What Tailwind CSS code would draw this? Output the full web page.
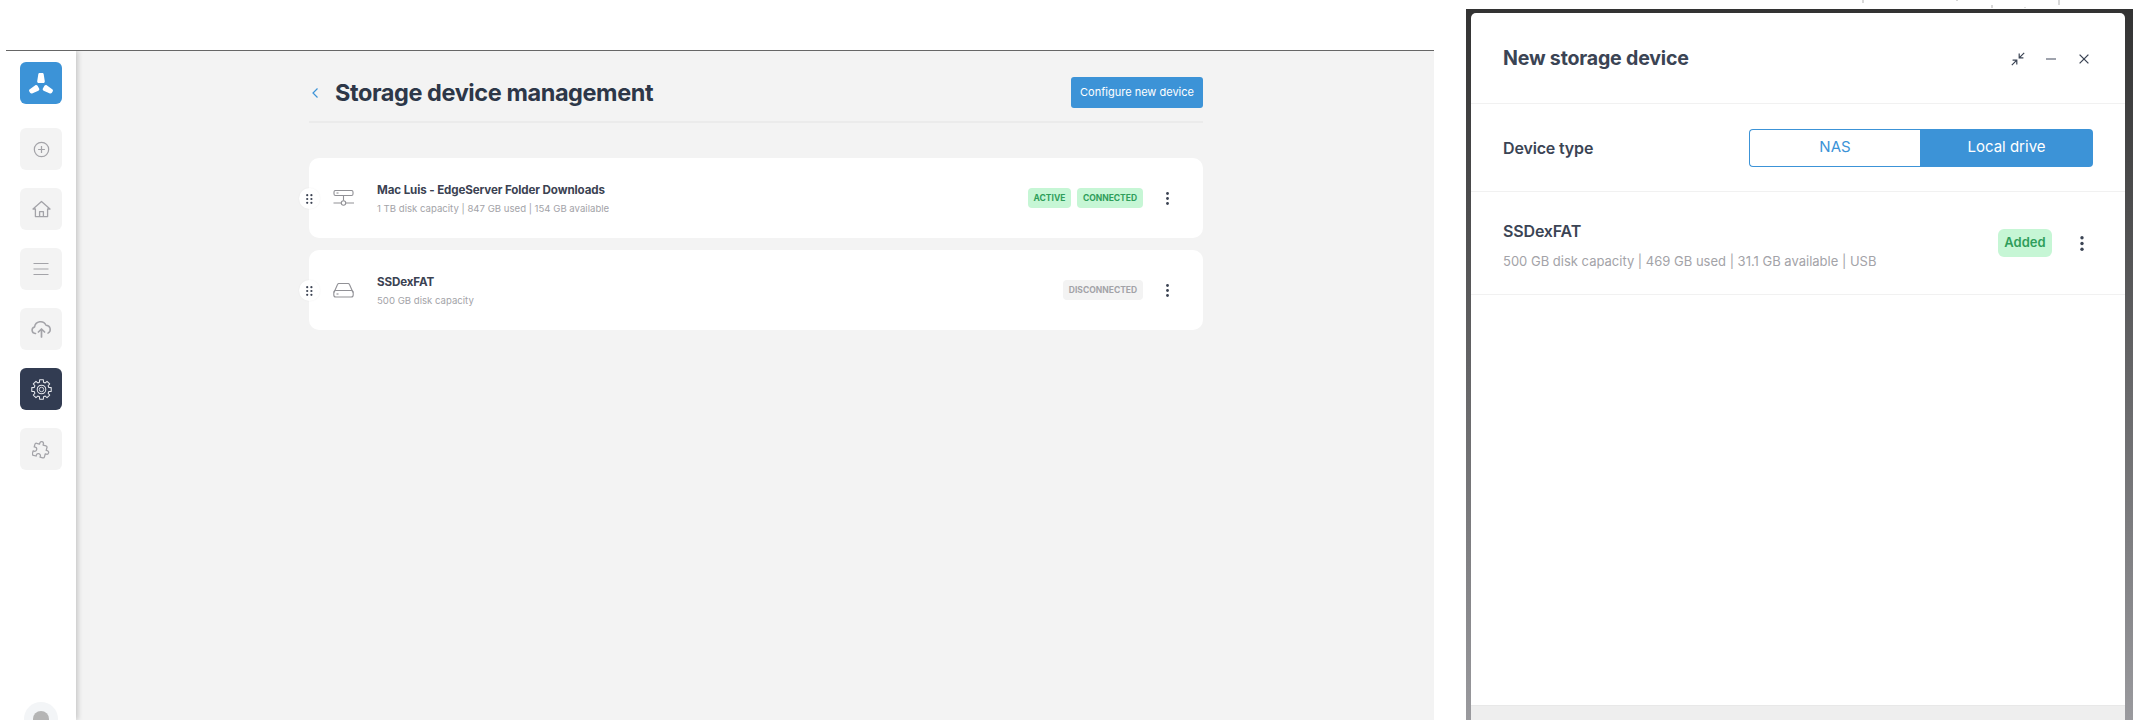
<!DOCTYPE html>
<html lang="en">
<head>
  <meta charset="UTF-8" />
  <title>Storage device management</title>
  <script src="https://cdn.jsdelivr.net/npm/@tailwindcss/browser@4"></script>
</head>
<body class="bg-white h-[720px] w-[2140px] overflow-hidden relative font-['Inter',sans-serif]">

  <!-- specks left over above the window -->
  <div class="absolute left-[1862px] top-0 w-[2px] h-[3px] bg-[#d8d8d8]"></div>
  <div class="absolute left-[1956px] top-0 w-[2px] h-[1px] bg-[#d8d8d8]"></div>
  <div class="absolute left-[1991px] top-[5px] w-[2px] h-[3px] bg-[#d8d8d8]"></div>
  <div class="absolute left-[2024px] top-[7px] w-[2px] h-[1px] bg-[#e0e0e0]"></div>
  <div class="absolute left-[2058px] top-0 w-[2px] h-[5px] bg-[#d8d8d8]"></div>

  <div class="flex h-full">
    <!-- App window -->
    <div class="ml-[6px] mt-[50px] w-[1428px] h-[670px] border-t-[1.5px] border-[#666] flex overflow-hidden">
      <aside class="w-[70px] shrink-0 bg-white flex flex-col items-center pt-[11px] relative z-10 shadow-[2px_0_5px_rgba(0,0,0,0.18)]">
        <div class="w-[42px] h-[42px] rounded-[6px] bg-[#3c93d7] flex items-center justify-center mb-[24px]">
          <svg width="24" height="21" viewBox="0 0 24 21" fill="#fff">
            <path d="M9.3 1.3C9.4.5 10 0 10.8 0h2.4c.8 0 1.4.5 1.5 1.3l1.1 6.9c.1.9-.6 1.8-1.5 1.8H9.7c-.9 0-1.6-.9-1.5-1.8z"/>
            <path d="M.8 16.2c-.7.4-1 1.3-.6 2l.9 1.6c.4.7 1.3 1 2 .7l6.3-2.8c.9-.4 1.2-1.5.7-2.3l-1.5-2.6c-.5-.8-1.6-1-2.3-.5z"/>
            <path d="M23.2 16.2c.7.4 1 1.3.6 2l-.9 1.6c-.4.7-1.3 1-2 .7l-6.3-2.8c-.9-.4-1.2-1.5-.7-2.3l1.5-2.6c.5-.8 1.6-1 2.3-.5z"/>
          </svg>
        </div>
        <div class="flex flex-col gap-[18px]">
          <div class="w-[42px] h-[42px] rounded-[6px] bg-[#f3f3f3] flex items-center justify-center">
            <svg width="17" height="17" viewBox="0 0 18 18" fill="none" stroke="#a3a3a8" stroke-width="1.3"><circle cx="9" cy="9" r="7.6"/><path d="M9 5.4v7.2M5.4 9h7.2"/></svg>
          </div>
          <div class="w-[42px] h-[42px] rounded-[6px] bg-[#f3f3f3] flex items-center justify-center">
            <svg width="19" height="18" viewBox="0 0 19 18" fill="none" stroke="#a3a3a8" stroke-width="1.3" stroke-linejoin="round"><path d="M1 9l8.5-7.5L18 9h-2.4v7.6H3.4V9z"/><path d="M7.6 16.6v-5h3.8v5"/></svg>
          </div>
          <div class="w-[42px] h-[42px] rounded-[6px] bg-[#f3f3f3] flex items-center justify-center">
            <svg width="16" height="14" viewBox="0 0 16 14" fill="none" stroke="#a3a3a8" stroke-width="1.2"><path d="M0.5 1.5h15M0.5 7h15M0.5 12.5h15"/></svg>
          </div>
          <div class="w-[42px] h-[42px] rounded-[6px] bg-[#f3f3f3] flex items-center justify-center">
            <svg width="21" height="18" viewBox="0 0 21 18" fill="none" stroke="#a3a3a8" stroke-width="1.5" stroke-linecap="round" stroke-linejoin="round"><path d="M4.6 13.4H4.2A3.3 3.3 0 0 1 3.6 6.9 6 6 0 0 1 15 5.2a4.2 4.2 0 0 1 2 7.9"/><path d="M10.5 17V9.4M7.4 12l3.1-3 3.1 3" stroke-width="1.7"/></svg>
          </div>
          <div class="w-[42px] h-[42px] rounded-[6px] bg-[#323c52] flex items-center justify-center">
            <svg width="21" height="21" viewBox="-12.2 -12.2 24.4 24.4" fill="none" stroke="#e7e9ee" stroke-width="1.2" stroke-linejoin="round"><path d="M-2.35-8.48L-2.19-11.29 2.19-11.29 2.35-8.48 4.33-7.66 6.43-9.53 9.53-6.43 7.66-4.33 8.48-2.35 11.29-2.19 11.29 2.19 8.48 2.35 7.66 4.33 9.53 6.43 6.43 9.53 4.33 7.66 2.35 8.48 2.19 11.29-2.19 11.29-2.35 8.48-4.33 7.66-6.43 9.53-9.53 6.43-7.66 4.33-8.48 2.35-11.29 2.19-11.29-2.19-8.48-2.35-7.66-4.33-9.53-6.43-6.43-9.53-4.33-7.66z"/><circle r="5"/><circle r="2.6" stroke-width="1"/></svg>
          </div>
          <div class="w-[42px] h-[42px] rounded-[6px] bg-[#f3f3f3] flex items-center justify-center">
            <svg width="19" height="19" viewBox="0 0 512 512" fill="none" stroke="#a3a3a8" stroke-width="34" stroke-linejoin="round"><path transform="rotate(15 256 256)" d="M413.66 246.1H386a2 2 0 01-2-2v-77.24A38.86 38.86 0 00345.14 128H267.9a2 2 0 01-2-2V98.34c0-27.14-21.5-49.86-48.64-50.33a49.53 49.53 0 00-50.4 49.51V126a2 2 0 01-2 2H87.62A39.74 39.74 0 0048 167.62V238a2 2 0 002 2h26.91c29.37 0 53.68 25.48 54.09 54.85.42 29.87-23.51 57.15-53.29 57.15H50a2 2 0 00-2 2v70.38A39.74 39.74 0 0087.62 464H158a2 2 0 002-2v-20.93c0-30.28 24.75-56.35 55-57.06 30.1-.7 57 20.31 57 50.28V462a2 2 0 002 2h71.14A38.86 38.86 0 00384 425.14v-78a2 2 0 012-2h28.48c27.63 0 49.52-22.67 49.52-50.4s-23.2-48.64-50.34-48.64z"/></svg>
          </div>
        </div>
        <div class="absolute left-[18px] top-[651px] w-[34px] h-[34px] rounded-full bg-[#f3f5f7] flex items-center justify-center">
          <div class="w-[16px] h-[16px] rounded-full bg-[#b5b5b5]"></div>
        </div>
      </aside>

      <main class="flex-1 bg-[#f3f3f3] pl-[233px] pt-[26px]">
        <div class="w-[894px]">
          <header class="h-[46px] border-b-2 border-[#ebebeb] flex items-start justify-between">
            <div class="flex items-center h-[31px]">
              <svg class="ml-[3px] mr-[17px]" width="6" height="10" viewBox="0 0 6 10" fill="none" stroke="#3c93d7" stroke-width="1.2"><path d="M5.5 0.5L1 5l4.5 4.5"/></svg>
              <h1 class="text-[23.5px] leading-[31px] font-bold text-[#2d3748] tracking-[-0.42px]">Storage device management</h1>
            </div>
            <button class="h-[31px] w-[132px] rounded-[3px] bg-[#3c93d7] text-white text-[11px] leading-none whitespace-nowrap">Configure new device</button>
          </header>

          <div class="mt-[35px] flex flex-col gap-[12px]">
            <div class="relative h-[80px] bg-white rounded-[10px] flex items-center pl-[24px] pr-[32px]">
              <div class="absolute -left-[10px] top-[30px] w-[21px] h-[21px] rounded-full bg-white shadow-[0_0_2px_rgba(0,0,0,0.06)] flex items-center justify-center">
                <svg width="7" height="10" viewBox="0 0 7 10" fill="#3b4252"><circle cx="1.2" cy="1.2" r="1.1"/><circle cx="5.4" cy="1.2" r="1.1"/><circle cx="1.2" cy="5" r="1.1"/><circle cx="5.4" cy="5" r="1.1"/><circle cx="1.2" cy="8.8" r="1.1"/><circle cx="5.4" cy="8.8" r="1.1"/></svg>
              </div>
              <svg class="mr-[23px] shrink-0" width="21" height="16" viewBox="0 0 21 16" fill="none" stroke="#919196" stroke-width="1.1"><rect x="1" y="0.5" width="19" height="5" rx="1.5"/><path d="M3.5 3h2" /><path d="M10.5 5.5v5M0.5 13h7.5M13 13h8"/><circle cx="10.5" cy="13" r="2.2"/></svg>
              <div class="flex-1 pt-[2px]">
                <div class="text-[11.6px] leading-[16px] font-bold text-[#3b4252] tracking-[-0.01em]">Mac Luis - EdgeServer Folder Downloads</div>
                <div class="text-[9.6px] leading-[14px] mt-[4px] text-[#a3a3a8]">1 TB disk capacity | 847 GB used | 154 GB available</div>
              </div>
              <span class="h-[20px] w-[43px] rounded-[4px] bg-[#c6f6d5] text-[#2f9e5b] text-[8.5px] font-bold flex items-center justify-center">ACTIVE</span>
              <span class="ml-[6px] h-[20px] w-[66px] rounded-[4px] bg-[#c6f6d5] text-[#2f9e5b] text-[8.5px] font-bold flex items-center justify-center">CONNECTED</span>
              <svg class="ml-[23px] mr-[2px]" width="3" height="13" viewBox="0 0 3 13" fill="#3b4252"><circle cx="1.5" cy="1.5" r="1.4"/><circle cx="1.5" cy="6.5" r="1.4"/><circle cx="1.5" cy="11.5" r="1.4"/></svg>
            </div>
            <div class="relative h-[80px] bg-white rounded-[10px] flex items-center pl-[24px] pr-[32px]">
              <div class="absolute -left-[10px] top-[30px] w-[21px] h-[21px] rounded-full bg-white shadow-[0_0_2px_rgba(0,0,0,0.06)] flex items-center justify-center">
                <svg width="7" height="10" viewBox="0 0 7 10" fill="#3b4252"><circle cx="1.2" cy="1.2" r="1.1"/><circle cx="5.4" cy="1.2" r="1.1"/><circle cx="1.2" cy="5" r="1.1"/><circle cx="5.4" cy="5" r="1.1"/><circle cx="1.2" cy="8.8" r="1.1"/><circle cx="5.4" cy="8.8" r="1.1"/></svg>
              </div>
              <svg class="mr-[23px] shrink-0" width="21" height="15" viewBox="0 0 21 15" fill="none" stroke="#919196" stroke-width="1.1"><path d="M1 9.5L4.5 1.5a1.5 1.5 0 0 1 1.3-1h9.4a1.5 1.5 0 0 1 1.3 1L20 9.5"/><rect x="0.8" y="7.5" width="19.4" height="6.5" rx="2"/><path d="M3.5 11h2"/></svg>
              <div class="flex-1 pt-[2px]">
                <div class="text-[11.6px] leading-[16px] font-bold text-[#3b4252] tracking-[-0.01em]">SSDexFAT</div>
                <div class="text-[9.6px] leading-[14px] mt-[4px] text-[#a3a3a8]">500 GB disk capacity</div>
              </div>
              <span class="h-[20px] w-[80px] rounded-[4px] bg-[#f3f3f3] text-[#a3a3a8] text-[8.5px] font-bold flex items-center justify-center">DISCONNECTED</span>
              <svg class="ml-[23px] mr-[2px]" width="3" height="13" viewBox="0 0 3 13" fill="#3b4252"><circle cx="1.5" cy="1.5" r="1.4"/><circle cx="1.5" cy="6.5" r="1.4"/><circle cx="1.5" cy="11.5" r="1.4"/></svg>
            </div>
          </div>
        </div>
      </main>
    </div>

    <!-- New storage device window -->
    <div class="ml-[32px] mt-[9px] w-[667px] h-[711px] pt-[4px] pl-[5px] pr-[8px] bg-gradient-to-b from-[#333333] to-[#9a9a9e]">
      <div class="h-full bg-white rounded-t-[5px] flex flex-col">
        <div class="h-[91px] border-b border-[#f1f1f1] flex items-center justify-between pt-[2px] pl-[32px] pr-[36px]">
          <h2 class="text-[19.6px] font-bold text-[#3b4454] tracking-[-0.01em]">New storage device</h2>
          <div class="flex items-center">
            <svg class="mr-[21px]" width="14" height="14" viewBox="0 0 14 14" fill="none" stroke="#3b4454" stroke-width="1.2"><path d="M0.8 13.2l5-5M1.6 8.2h4.2v4.2M13.2 0.8l-5 5M8.2 1.6v4.2h4.2"/></svg>
            <svg class="mr-[23px]" width="10" height="2" viewBox="0 0 10 2" fill="none" stroke="#6b7280" stroke-width="1.3"><path d="M0 1h10"/></svg>
            <svg width="10" height="10" viewBox="0 0 10 10" fill="none" stroke="#3b4454" stroke-width="1.3"><path d="M0.6 0.6l8.8 8.8M9.4 0.6l-8.8 8.8"/></svg>
          </div>
        </div>
        <div class="h-[88px] border-b border-[#f1f1f1] flex items-center justify-between pl-[32px] pr-[32px]">
          <span class="text-[16px] font-semibold text-[#3b4454] tracking-[-0.01em]">Device type</span>
          <div class="flex w-[344px] h-[38px]">
            <div class="w-[171px] border border-[#3c93d7] border-r-0 rounded-l-[4px] text-[#3c93d7] text-[15px] flex items-center justify-center">NAS</div>
            <div class="flex-1 bg-[#3c93d7] rounded-r-[4px] text-white text-[15px] flex items-center justify-center">Local drive</div>
          </div>
        </div>
        <div class="h-[103px] border-b border-[#f1f1f1] flex items-center pl-[32px] pr-[41px]">
          <div class="flex-1 mt-[6px]">
            <div class="text-[16px] leading-[20px] font-semibold text-[#3b4454] tracking-[-0.01em]">SSDexFAT</div>
            <div class="text-[13px] leading-[20px] mt-[10px] text-[#a3a3a8]">500 GB disk capacity | 469 GB used | 31.1 GB available | USB</div>
          </div>
          <span class="h-[28px] w-[54px] rounded-[6px] bg-[#c6f6d5] text-[#2f9e5b] text-[13px] font-semibold flex items-center justify-center">Added</span>
          <svg class="ml-[28px]" width="4" height="15" viewBox="0 0 4 15" fill="#3b4454"><circle cx="2" cy="1.8" r="1.7"/><circle cx="2" cy="7.5" r="1.7"/><circle cx="2" cy="13.2" r="1.7"/></svg>
        </div>
        <div class="flex-1"></div>
        <div class="h-[15px] bg-[#eeeeee] border-t border-[#e8e8e8]"></div>
      </div>
    </div>
  </div>
</body>
</html>
